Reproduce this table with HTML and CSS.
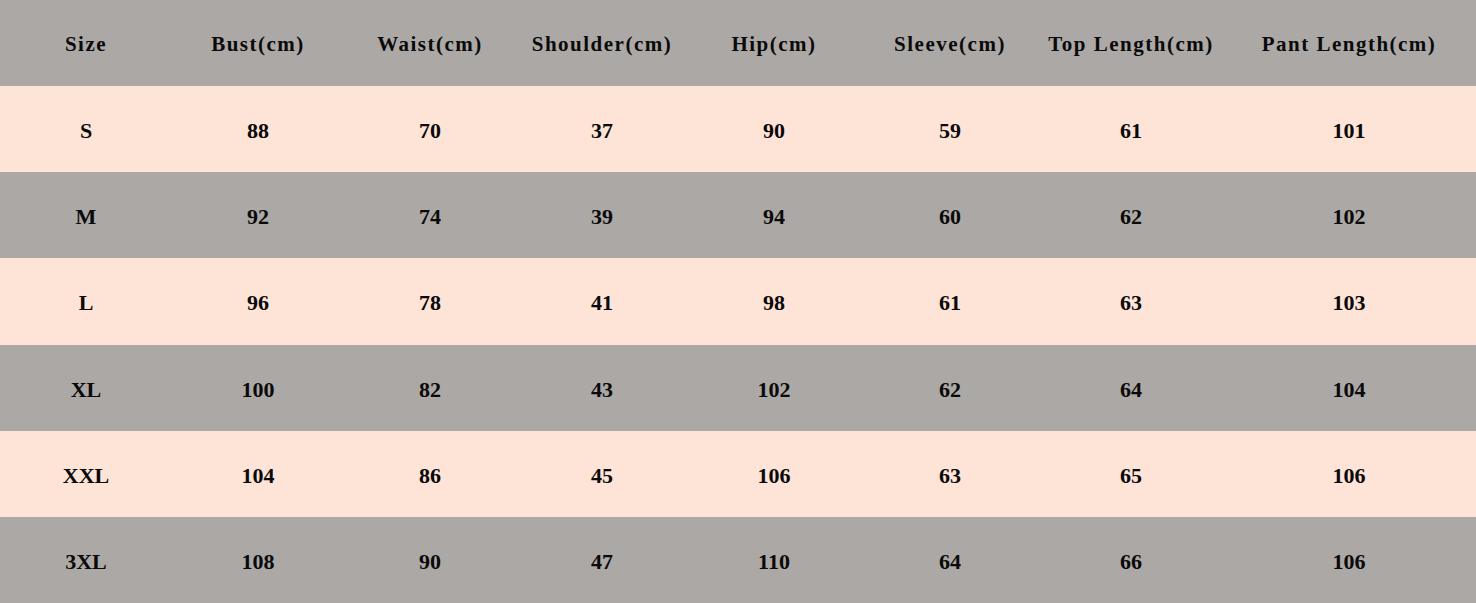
FILE: index.html
```html
<!DOCTYPE html>
<html>
<head>
<meta charset="utf-8">
<link rel="stylesheet" href="styles.css">
</head>
<body>
<div class="chart">
  <div class="row head">
    <div>Size</div><div>Bust(cm)</div><div>Waist(cm)</div><div>Shoulder(cm)</div><div>Hip(cm)</div><div>Sleeve(cm)</div><div>Top Length(cm)</div><div>Pant Length(cm)</div>
  </div>
  <div class="row light">
    <div>S</div><div>88</div><div>70</div><div>37</div><div>90</div><div>59</div><div>61</div><div>101</div>
  </div>
  <div class="row dark">
    <div>M</div><div>92</div><div>74</div><div>39</div><div>94</div><div>60</div><div>62</div><div>102</div>
  </div>
  <div class="row light">
    <div>L</div><div>96</div><div>78</div><div>41</div><div>98</div><div>61</div><div>63</div><div>103</div>
  </div>
  <div class="row dark">
    <div>XL</div><div>100</div><div>82</div><div>43</div><div>102</div><div>62</div><div>64</div><div>104</div>
  </div>
  <div class="row light">
    <div>XXL</div><div>104</div><div>86</div><div>45</div><div>106</div><div>63</div><div>65</div><div>106</div>
  </div>
  <div class="row dark">
    <div>3XL</div><div>108</div><div>90</div><div>47</div><div>110</div><div>64</div><div>66</div><div>106</div>
  </div>
</div>
</body>
</html>
```

FILE: styles.css
```css
html, body {
  margin: 0;
  padding: 0;
  background: #ffffff;
}

.chart {
  width: 1476px;
  height: 603px;
  display: grid;
  grid-template-rows: repeat(7, 1fr);
}

.row {
  display: grid;
  grid-template-columns: 172px 172px 172px 172px 172px 180px 182px 254px;
  align-items: center;
  justify-items: center;
  color: #0a0a0a;
  font-family: "Liberation Serif", "Times New Roman", serif;
  font-weight: bold;
  font-size: 22px;
}

.row > div {
  padding-top: 4px;
  white-space: nowrap;
}

.head {
  background: #aca8a6;
  font-size: 21px;
  letter-spacing: 1.5px;
}

.head > div {
  padding-top: 2px;
}

.dark {
  background: #aca8a6;
}

.light {
  background: #fde4d7;
}
```
